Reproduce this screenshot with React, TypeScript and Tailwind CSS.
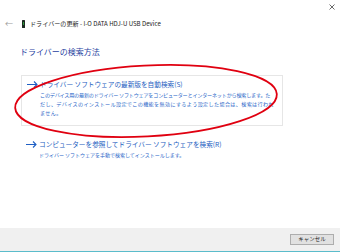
import React from "react";

const font = { fontFamily: '"Noto Sans CJK JP", "Noto Sans", sans-serif' };

function Arrow({ className }: { className?: string }) {
  return (
    <svg width="11" height="7" viewBox="0 0 11 7" className={className}>
      <path d="M0 3.5h10M7 0.5l3 3-3 3" fill="none" stroke="#1f5fc4" strokeWidth="1.1" />
    </svg>
  );
}

export default function App() {
  return (
    <div className="relative flex h-[252px] w-[340px] flex-col overflow-hidden bg-white" style={font}>
      {/* title bar */}
      <div className="flex h-[14px] items-center justify-end pr-[5px]">
        <svg width="6" height="6" viewBox="0 0 6 6">
          <path d="M0.5 0.5l5 5M5.5 0.5l-5 5" stroke="#444" strokeWidth="0.8" />
        </svg>
      </div>

      {/* nav row */}
      <div className="flex h-[20px] items-center">
        <span className="ml-[5px] w-[16px] text-[8px] leading-none text-[#9a9a9a]">←</span>
        <span className="ml-[1px] flex h-[8px] w-[3px] flex-col rounded-[0.5px] bg-[#1c2a22]">
          <span className="mx-auto mt-[2px] h-[3px] w-[1.5px] bg-[#2e9a3c]" />
        </span>
        <span className="ml-[5px] text-[6.1px] leading-none text-[#222]">
          ドライバーの更新 - I-O DATA HDJ-U USB Device
        </span>
      </div>

      {/* heading */}
      <div className="ml-[20px] mt-[12px] h-[12px] text-[8px] leading-[12px] text-[#1f3f9f]">
        ドライバーの検索方法
      </div>

      {/* option 1 */}
      <div className="ml-[21px] mt-[17px] h-[51px] w-[262px] border border-[#e6e6e6] pl-[5px] pt-[3px]">
        <div className="flex h-[10px] items-center">
          <Arrow className="mr-[2px]" />
          <span className="whitespace-nowrap text-[6.65px] leading-[10px] text-[#1a5cc0]">
            ドライバー ソフトウェアの最新版を自動検索(S)
          </span>
        </div>
        <div className="ml-[13px] mt-[1px] whitespace-nowrap text-[5.1px] leading-[9px] text-[#1f66c8]">
          <div className="tracking-[-0.2px]">
            このデバイス用の最新のドライバー ソフトウェアをコンピューターとインターネットから検索します。た
          </div>
          <div className="tracking-[0.35px]">
            だし、デバイスのインストール設定でこの機能を無効にするよう設定した場合は、検索は行われ
          </div>
          <div className="tracking-[0.35px]">ません。</div>
        </div>
      </div>

      {/* option 2 */}
      <div className="ml-[21px] mt-[9px] pl-[5px] pt-[4px]">
        <div className="flex h-[10px] items-center">
          <Arrow className="mr-[2px]" />
          <span className="whitespace-nowrap text-[6.65px] leading-[10px] text-[#1a5cc0]">
            コンピューターを参照してドライバー ソフトウェアを検索(R)
          </span>
        </div>
        <div className="ml-[13px] mt-[1px] whitespace-nowrap text-[5px] leading-[9px] text-[#1f66c8]">
          ドライバー ソフトウェアを手動で検索してインストールします。
        </div>
      </div>

      <div className="flex-1" />

      {/* footer */}
      <div className="flex h-[24px] items-start justify-end border-b border-[#5bbccb] bg-[#f0f0f0] pr-[6px] pt-[6px]">
        <button className="flex h-[11px] w-[44px] items-center justify-center border border-[#adadad] bg-[#e1e1e1] text-[5.5px] leading-none text-[#222]">
          キャンセル
        </button>
      </div>

      {/* red annotation ellipse */}
      <svg className="pointer-events-none absolute left-0 top-0" width="340" height="252">
        <ellipse cx="146" cy="101" rx="131" ry="35.5" transform="rotate(-3 146 101)" fill="none" stroke="#e00010" strokeWidth="1.8" />
      </svg>
    </div>
  );
}
